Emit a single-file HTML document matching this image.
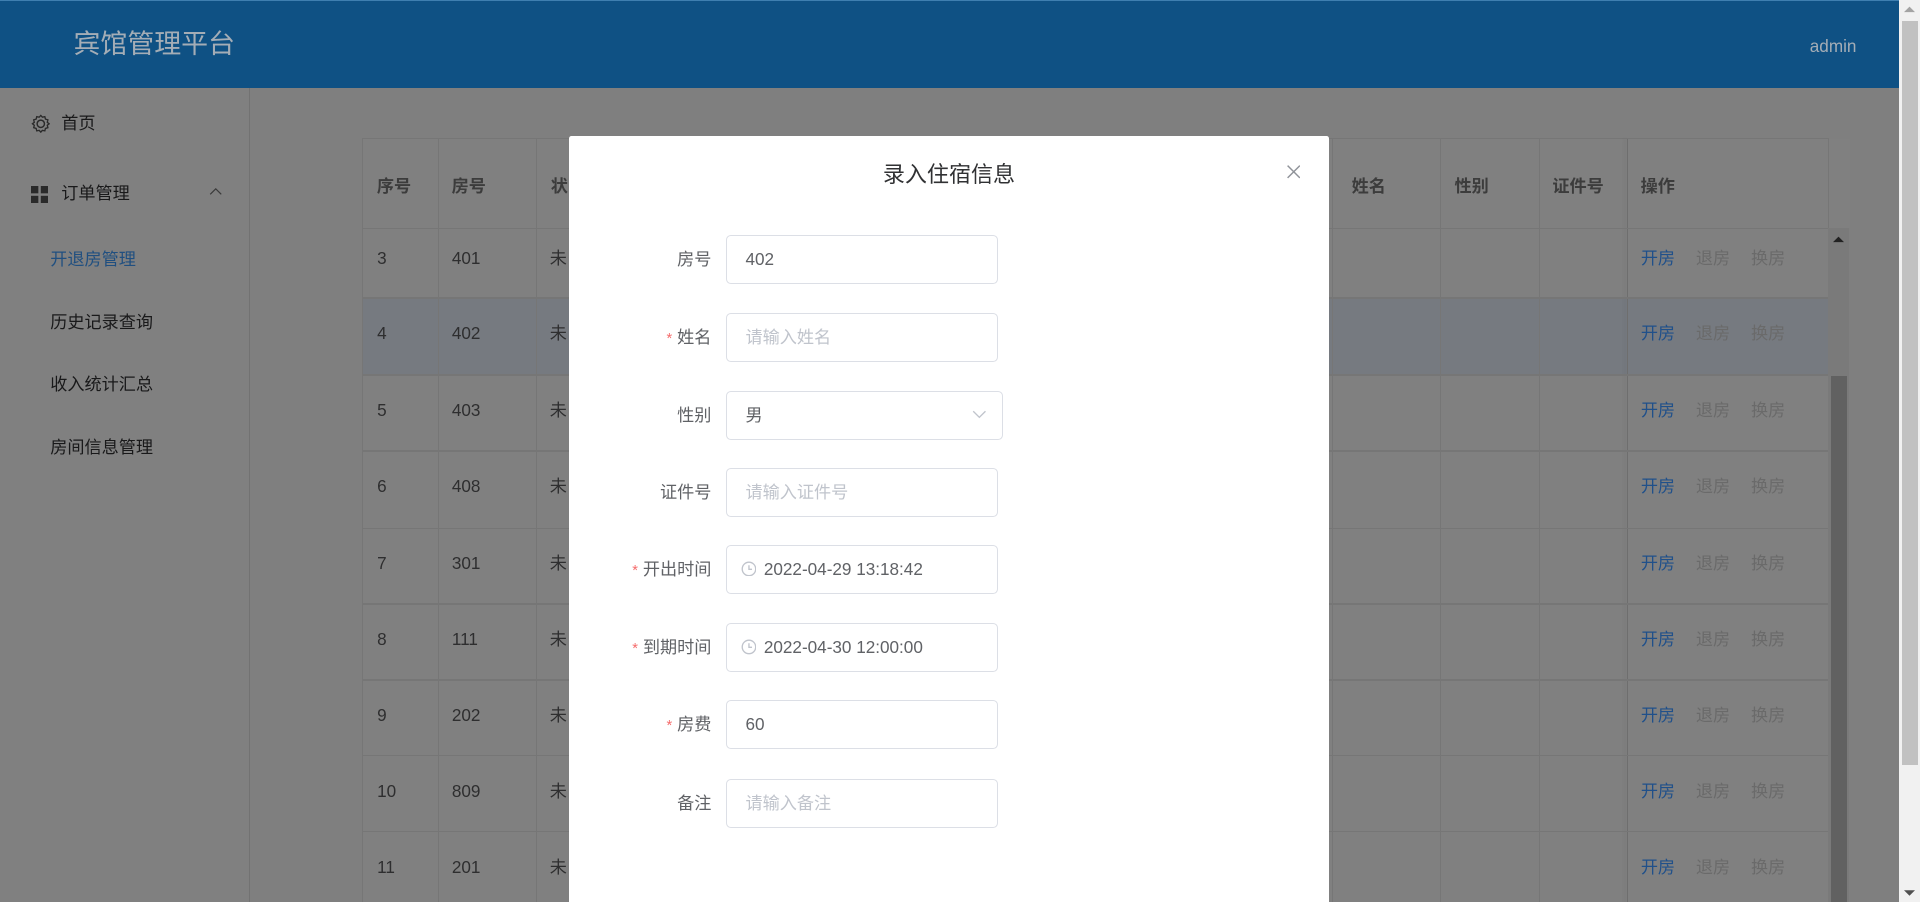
<!DOCTYPE html>
<html><head><meta charset="utf-8">
<style>
html,body{margin:0;padding:0;width:1920px;height:902px;overflow:hidden;background:#808080;}
#root{zoom:1.2244898;position:relative;width:1568px;height:737px;overflow:hidden;font-family:"Liberation Sans","Noto Sans CJK SC",sans-serif;font-size:14px;color:#19191a;background:#7f7f7f;}
.a{position:absolute;}
.hdr{left:0;top:0;width:1568px;height:72px;background:#0f5184;border-top:1px solid #3f7fb0;box-sizing:border-box;}
.side{left:0;top:72px;width:203px;height:700px;background:#808080;border-right:1px solid #727272;}
.mi{position:absolute;white-space:nowrap;font-size:14px;color:#19191a;line-height:20px;}
.tbl{left:296px;top:113px;width:1197px;height:640px;background:#808080;border-left:1px solid #767676;border-top:1px solid #767676;}
.vl{position:absolute;top:0;width:1px;height:640px;background:#767676;}
.hl{position:absolute;left:0;width:1197px;height:1px;background:#767676;}
.th{position:absolute;top:27px;font-weight:bold;color:#3c3c3c;white-space:nowrap;}
.td{position:absolute;color:#2e2e2f;white-space:nowrap;line-height:20px;}
.modal{left:465px;top:111px;width:620px;height:640px;background:#fff;border-radius:2px;}
.lbl{position:absolute;right:504px;width:120px;text-align:right;color:#606266;font-size:14px;line-height:40px;}
.lbl b{color:#f56c6c;font-weight:normal;margin-right:4px;font-size:12px;}
.inp{position:absolute;left:128px;width:222px;height:40px;border:1px solid #dcdfe6;border-radius:4px;line-height:38px;padding-left:15px;box-sizing:border-box;color:#606266;font-size:14px;}
.ph{color:#c0c4cc;}
</style></head><body><div id="root">
<div class="a hdr"></div>
<div class="a" style="left:60px;top:22px;font-size:22px;color:#a4adb6;line-height:28px;">宾馆管理平台</div>
<div class="a" style="left:1478px;top:29px;font-size:14px;color:#a4adb6;">admin</div>

<div class="a side"></div>
<svg class="a" style="left:25px;top:93px" width="16" height="16" viewBox="0 0 16 16"><circle cx="8" cy="8" r="3" fill="none" stroke="#2a2a2a" stroke-width="1.2"/><path d="M8 1.2 L9.3 2.6 L11.3 2.2 L11.8 4.2 L13.8 4.8 L13.3 6.8 L14.8 8 L13.3 9.2 L13.8 11.2 L11.8 11.8 L11.3 13.8 L9.3 13.4 L8 14.8 L6.7 13.4 L4.7 13.8 L4.2 11.8 L2.2 11.2 L2.7 9.2 L1.2 8 L2.7 6.8 L2.2 4.8 L4.2 4.2 L4.7 2.2 L6.7 2.6 Z" fill="none" stroke="#2a2a2a" stroke-width="1.1"/></svg>
<div class="mi" style="left:50px;top:91px;">首页</div>
<svg class="a" style="left:25px;top:152px" width="14" height="14"><rect x="0" y="0" width="6" height="6" fill="#2a2a2a"/><rect x="8" y="0" width="6" height="6" fill="#2a2a2a"/><rect x="0" y="8" width="6" height="6" fill="#2a2a2a"/><rect x="8" y="8" width="6" height="6" fill="#2a2a2a"/></svg>
<div class="mi" style="left:50px;top:148px;">订单管理</div>
<svg class="a" style="left:171px;top:153px" width="11" height="7"><path d="M1 6 L5.5 1.5 L10 6" fill="none" stroke="#3a3a3a" stroke-width="1"/></svg>
<div class="mi" style="left:41px;top:202px;color:#204f80;">开退房管理</div>
<div class="mi" style="left:41px;top:253px;">历史记录查询</div>
<div class="mi" style="left:41px;top:304px;">收入统计汇总</div>
<div class="mi" style="left:41px;top:355px;">房间信息管理</div>

<div class="a tbl">
 <div class="a" style="left:0;top:129px;width:1197px;height:63px;background:#767a80;"></div>
 <div class="vl" style="left:61px"></div><div class="vl" style="left:141px"></div>
 <div class="vl" style="left:791px"></div><div class="vl" style="left:879px"></div><div class="vl" style="left:960px"></div>
 <div class="vl" style="left:1032px;background:#6e6e6e;box-shadow:-2px 0 3px rgba(0,0,0,.12)"></div>
 <div class="hl" style="top:72px"></div>
 <div class="hl" style="top:129px"></div><div class="hl" style="top:192px"></div><div class="hl" style="top:254px"></div>
 <div class="hl" style="top:317px"></div><div class="hl" style="top:379px"></div><div class="hl" style="top:441px"></div>
 <div class="hl" style="top:503px"></div><div class="hl" style="top:565px"></div><div class="hl" style="top:627px"></div>
 <div class="th" style="left:11px">序号</div><div class="th" style="left:72px">房号</div><div class="th" style="left:153px">状</div>
 <div class="th" style="left:807px">姓名</div><div class="th" style="left:891px">性别</div><div class="th" style="left:971px">证件号</div><div class="th" style="left:1043px">操作</div>
 <div class="a" style="left:1196px;top:0;width:17px;height:72px;background:#808080;border-left:1px solid #767676"></div>
</div>
<div class="a" style="left:1493px;top:186px;width:17px;height:560px;background:#7a7a7a;"></div>
<div class="a" style="left:1495px;top:307px;width:13px;height:440px;background:#616161;"></div>
<svg class="a" style="left:1497px;top:193px" width="9" height="6"><path d="M0 5 L4.5 0.5 L9 5 Z" fill="#222"/></svg>

<div class="a" style="left:0;top:0;">
<div class="td" style="left:308px;top:201px">3</div><div class="td" style="left:369px;top:201px">401</div><div class="td" style="left:449px;top:201px">未</div>
<div class="td" style="left:308px;top:262px">4</div><div class="td" style="left:369px;top:262px">402</div><div class="td" style="left:449px;top:262px">未</div>
<div class="td" style="left:308px;top:325px">5</div><div class="td" style="left:369px;top:325px">403</div><div class="td" style="left:449px;top:325px">未</div>
<div class="td" style="left:308px;top:387px">6</div><div class="td" style="left:369px;top:387px">408</div><div class="td" style="left:449px;top:387px">未</div>
<div class="td" style="left:308px;top:450px">7</div><div class="td" style="left:369px;top:450px">301</div><div class="td" style="left:449px;top:450px">未</div>
<div class="td" style="left:308px;top:512px">8</div><div class="td" style="left:369px;top:512px">111</div><div class="td" style="left:449px;top:512px">未</div>
<div class="td" style="left:308px;top:574px">9</div><div class="td" style="left:369px;top:574px">202</div><div class="td" style="left:449px;top:574px">未</div>
<div class="td" style="left:308px;top:636px">10</div><div class="td" style="left:369px;top:636px">809</div><div class="td" style="left:449px;top:636px">未</div>
<div class="td" style="left:308px;top:698px">11</div><div class="td" style="left:369px;top:698px">201</div><div class="td" style="left:449px;top:698px">未</div>
</div>
<div class="a" style="left:1340px;top:0;">
<div class="td" style="left:0;top:201px;color:#20508a">开房</div><div class="td" style="left:45px;top:201px;color:#6a6a6a">退房</div><div class="td" style="left:90px;top:201px;color:#6a6a6a">换房</div>
<div class="td" style="left:0;top:262px;color:#20508a">开房</div><div class="td" style="left:45px;top:262px;color:#6a6a6a">退房</div><div class="td" style="left:90px;top:262px;color:#6a6a6a">换房</div>
<div class="td" style="left:0;top:325px;color:#20508a">开房</div><div class="td" style="left:45px;top:325px;color:#6a6a6a">退房</div><div class="td" style="left:90px;top:325px;color:#6a6a6a">换房</div>
<div class="td" style="left:0;top:387px;color:#20508a">开房</div><div class="td" style="left:45px;top:387px;color:#6a6a6a">退房</div><div class="td" style="left:90px;top:387px;color:#6a6a6a">换房</div>
<div class="td" style="left:0;top:450px;color:#20508a">开房</div><div class="td" style="left:45px;top:450px;color:#6a6a6a">退房</div><div class="td" style="left:90px;top:450px;color:#6a6a6a">换房</div>
<div class="td" style="left:0;top:512px;color:#20508a">开房</div><div class="td" style="left:45px;top:512px;color:#6a6a6a">退房</div><div class="td" style="left:90px;top:512px;color:#6a6a6a">换房</div>
<div class="td" style="left:0;top:574px;color:#20508a">开房</div><div class="td" style="left:45px;top:574px;color:#6a6a6a">退房</div><div class="td" style="left:90px;top:574px;color:#6a6a6a">换房</div>
<div class="td" style="left:0;top:636px;color:#20508a">开房</div><div class="td" style="left:45px;top:636px;color:#6a6a6a">退房</div><div class="td" style="left:90px;top:636px;color:#6a6a6a">换房</div>
<div class="td" style="left:0;top:698px;color:#20508a">开房</div><div class="td" style="left:45px;top:698px;color:#6a6a6a">退房</div><div class="td" style="left:90px;top:698px;color:#6a6a6a">换房</div>
</div>

<div class="a modal">
 <div class="a" style="left:0;width:620px;top:20px;text-align:center;font-size:18px;color:#303133;line-height:24px;">录入住宿信息</div>
 <svg class="a" style="left:586px;top:24px" width="11" height="11"><path d="M0.5 0.5 L10.5 10.5 M10.5 0.5 L0.5 10.5" stroke="#909399" stroke-width="1.2"/></svg>

 <div class="lbl" style="top:81px">房号</div><div class="inp" style="top:81px">402</div>
 <div class="lbl" style="top:145px"><b>*</b>姓名</div><div class="inp ph" style="top:145px">请输入姓名</div>
 <div class="lbl" style="top:208px">性别</div><div class="inp" style="top:208px;width:226px">男<svg style="position:absolute;right:12px;top:15px" width="12" height="8"><path d="M1 1 L6 6 L11 1" fill="none" stroke="#c0c4cc" stroke-width="1.1"/></svg></div>
 <div class="lbl" style="top:271px">证件号</div><div class="inp ph" style="top:271px">请输入证件号</div>
 <div class="lbl" style="top:334px"><b>*</b>开出时间</div><div class="inp" style="top:334px;padding-left:30px;">2022-04-29 13:18:42<svg style="position:absolute;left:11px;top:12px" width="13" height="13"><circle cx="6.5" cy="6.5" r="5.5" fill="none" stroke="#c0c4cc" stroke-width="1.1"/><path d="M6.5 3.5 V6.8 H9" fill="none" stroke="#c0c4cc" stroke-width="1.1"/></svg></div>
 <div class="lbl" style="top:398px"><b>*</b>到期时间</div><div class="inp" style="top:398px;padding-left:30px;">2022-04-30 12:00:00<svg style="position:absolute;left:11px;top:12px" width="13" height="13"><circle cx="6.5" cy="6.5" r="5.5" fill="none" stroke="#c0c4cc" stroke-width="1.1"/><path d="M6.5 3.5 V6.8 H9" fill="none" stroke="#c0c4cc" stroke-width="1.1"/></svg></div>
 <div class="lbl" style="top:461px"><b>*</b>房费</div><div class="inp" style="top:461px">60</div>
 <div class="lbl" style="top:525px">备注</div><div class="inp ph" style="top:525px">请输入备注</div>
</div>

<div class="a" style="left:1551px;top:0;width:17px;height:737px;background:#f1f1f1;"></div>
<div class="a" style="left:1553px;top:17px;width:13px;height:608px;background:#c1c1c1;"></div>
<svg class="a" style="left:1555px;top:5px" width="9" height="6"><path d="M0 5 L4.5 0.5 L9 5 Z" fill="#a3a3a3"/></svg>
<svg class="a" style="left:1555px;top:726px" width="9" height="6"><path d="M0 1 L4.5 5.5 L9 1 Z" fill="#505050"/></svg>
</div></body></html>
